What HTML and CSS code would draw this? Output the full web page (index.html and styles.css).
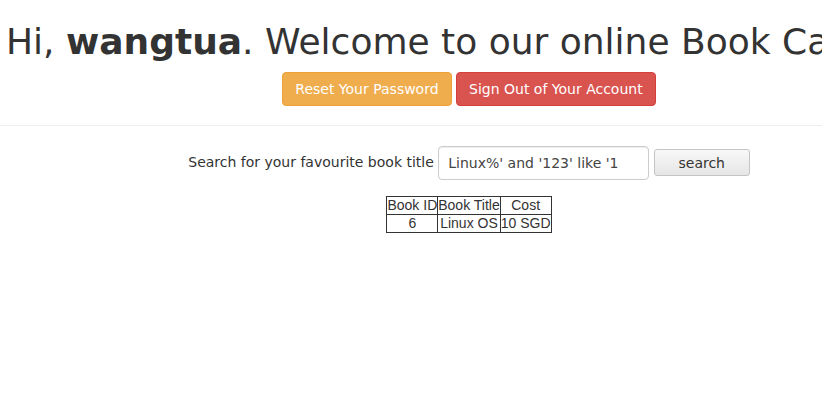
FILE: index.html
```html
<!DOCTYPE html>
<html>
<head>
<meta charset="utf-8">
<link rel="stylesheet" href="styles.css">
</head>
<body>
<div class="top">
  <h1 class="title">Hi, <b>wangtua</b>. Welcome to our online Book Catalog</h1>
  <div class="actions">
    <a class="btn btn-warning">Reset Your Password</a>
    <a class="btn btn-danger">Sign Out of Your Account</a>
  </div>
</div>
<hr class="rule">
<div class="main">
  <form class="search">
    <label class="search-label">Search for your favourite book title</label>
    <input class="search-input" type="text" value="Linux%' and '123' like '1">
    <button class="search-btn" type="button">search</button>
  </form>
  <table class="books">
    <tr><td>Book ID</td><td>Book Title</td><td>Cost</td></tr>
    <tr><td>6</td><td>Linux OS</td><td>10 SGD</td></tr>
  </table>
</div>
</body>
</html>
```
FILE: styles.css
```css
html, body {
  margin: 0;
  padding: 0;
  overflow: hidden;
  background: #fff;
}
body {
  font-family: "DejaVu Sans", sans-serif;
  font-size: 14px;
  line-height: 1.42857;
  color: #333;
}
.top, .main {
  width: 922px;
  margin-left: 8px;
  text-align: center;
}
.title {
  margin: 22px 0 10px -2px;
  font-size: 36px;
  font-weight: 400;
  line-height: 1.1;
  white-space: nowrap;
  text-align: left;
}
.title b { font-weight: 700; }
.actions {
  height: 34px;
}
.btn {
  display: inline-block;
  box-sizing: border-box;
  height: 34px;
  padding: 6px 12px;
  border: 1px solid transparent;
  border-radius: 4px;
  font-size: 14px;
  line-height: 20px;
  color: #fff;
  vertical-align: middle;
}
.btn-warning { background: #f0ad4e; border-color: #eea236; }
.btn-danger { background: #d9534f; border-color: #d43f3a; }
.rule {
  margin: 19px 0 20px;
  border: 0;
  border-top: 1px solid #eee;
}
.search {
  margin: 0;
  height: 34px;
}
.search-label {
  vertical-align: middle;
}
.search-input {
  box-sizing: border-box;
  width: 211px;
  height: 34px;
  padding: 6px 9px;
  border: 1px solid #ccc;
  border-radius: 4px;
  font-family: "DejaVu Sans", sans-serif;
  font-size: 14px;
  color: #444;
  vertical-align: middle;
  box-shadow: inset 0 1px 1px rgba(0,0,0,.075);
}
.search-btn {
  box-sizing: border-box;
  width: 96px;
  height: 27px;
  border: 1px solid #c4c4c4;
  border-radius: 3px;
  background: linear-gradient(#f8f8f8, #e6e6e6);
  font-family: "DejaVu Sans", sans-serif;
  font-size: 14px;
  color: #333;
  vertical-align: middle;
}
.books {
  margin: 16px auto 0;
  border-collapse: collapse;
  font-family: "Liberation Sans", Arial, sans-serif;
  font-size: 14px;
  line-height: 17px;
  color: #333;
}
.books td {
  border: 1px solid #333;
  padding: 0;
  text-align: center;
}
```
